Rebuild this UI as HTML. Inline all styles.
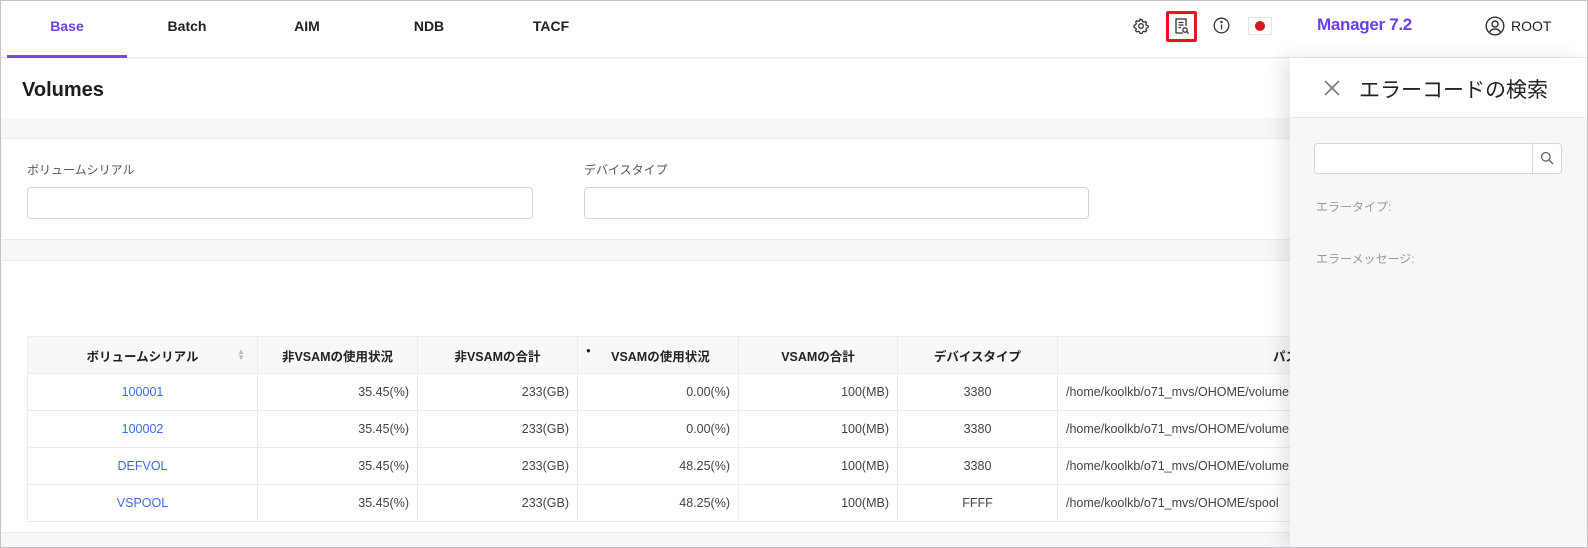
<!DOCTYPE html>
<html><head><meta charset="utf-8"><style>
*{box-sizing:border-box;margin:0;padding:0}
body{width:1588px;height:548px;overflow:hidden;background:#f6f7f9;font-family:"Liberation Sans","Noto Sans CJK JP",sans-serif;color:#222;position:relative}
.frame{position:absolute;left:0;top:0;width:1588px;height:548px;border:1px solid #c4c4c4;pointer-events:none;z-index:50}
.hdr{position:absolute;left:0;top:0;width:1588px;height:58px;background:#fff;border-bottom:1px solid #e8e8ec}
.tab{position:absolute;top:0;height:58px;line-height:52px;width:120px;text-align:center;font-size:14px;font-weight:bold;color:#222}
.abs{position:absolute}
.card{position:absolute;background:#fff}
.lbl{position:absolute;font-size:12px;color:#555}
.inp{position:absolute;height:32px;border:1px solid #d6d6da;border-radius:4px;background:#fff}
table{border-collapse:collapse;position:absolute;left:27px;top:336px;table-layout:fixed}
td,th{border:1px solid #ececee;height:37px;font-size:12.5px;padding:0 8px;white-space:nowrap;overflow:hidden}
th{background:#f8f8f9;font-weight:bold;color:#222}
td{color:#444}
.r{text-align:right}.c{text-align:center}.lk{color:#3a6cf0;text-align:center}
.panel{position:absolute;left:1290px;top:58px;width:296px;height:490px;background:#f6f7f9;box-shadow:-8px 0 18px rgba(0,0,0,.10);z-index:10}
</style></head><body>
<div class="hdr">
 <div class="tab" style="left:7px;color:#6b3ff0">Base</div>
 <div class="abs" style="left:7px;top:55px;width:120px;height:3px;background:#7447f0"></div>
 <div class="tab" style="left:127px">Batch</div>
 <div class="tab" style="left:247px">AIM</div>
 <div class="tab" style="left:369px">NDB</div>
 <div class="tab" style="left:491px">TACF</div>
 <svg class="abs" style="left:1133px;top:18px" width="16" height="16" viewBox="0 0 16 16" fill="none" stroke="#333" stroke-width="1.3"><circle cx="8" cy="8" r="2.3"/><path d="M8 1.5l1.2.3.3 1.6 1.3.7 1.5-.6 1.2 1.1-.6 1.5.6 1.3 1.6.5v1.6l-1.6.5-.6 1.3.6 1.5-1.2 1.1-1.5-.6-1.3.7-.3 1.6H7l-.3-1.6-1.3-.7-1.5.6-1.2-1.1.6-1.5-.6-1.3-1.6-.5V7.2l1.6-.5.6-1.3-.6-1.5 1.2-1.1 1.5.6 1.3-.7.3-1.6z"/></svg>
 <div class="abs" style="left:1166px;top:11px;width:31px;height:31px;border:3px solid #e8151f;border-radius:2px"></div>
 <svg class="abs" style="left:1174px;top:18px" width="16" height="17" viewBox="0 0 16 17" fill="none" stroke="#333" stroke-width="1.3"><path d="M9 15H2V1h10v7"/><path d="M4.5 4.5h5M4.5 7h5M4.5 9.5h2.5"/><circle cx="11" cy="12" r="2.2"/><path d="M12.6 13.6l2 2"/></svg>
 <svg class="abs" style="left:1213px;top:17px" width="17" height="17" viewBox="0 0 17 17" fill="none" stroke="#333" stroke-width="1.3"><circle cx="8.5" cy="8.5" r="7.3"/><path d="M8.5 7.5v5"/><circle cx="8.5" cy="5" r=".6" fill="#333"/></svg>
 <div class="abs" style="left:1248px;top:17px;width:24px;height:18px;background:#fff;border:1px solid #e6e6e6"><div class="abs" style="left:6px;top:3px;width:10px;height:10px;border-radius:50%;background:#d8141c"></div></div>
 <div class="abs" style="left:1317px;top:15px;font-size:17px;font-weight:bold;color:#6b3ff0;letter-spacing:-0.3px">Manager 7.2</div>
 <svg class="abs" style="left:1485px;top:16px" width="20" height="20" viewBox="0 0 20 20" fill="none" stroke="#333" stroke-width="1.4"><circle cx="10" cy="10" r="8.8"/><circle cx="10" cy="8" r="3"/><path d="M4.5 16.3c1.3-2.4 3.3-3.3 5.5-3.3s4.2.9 5.5 3.3"/></svg>
 <div class="abs" style="left:1511px;top:18px;font-size:14px;color:#222">ROOT</div>
</div>
<div class="card" style="left:1px;top:59px;width:1586px;height:59px"></div>
<div class="abs" style="left:22px;top:79px;font-size:20px;font-weight:bold;color:#1c1c1c">Volumes</div>
<div class="card" style="left:2px;top:138px;width:1584px;height:102px;border-top:1px solid #ececee;border-bottom:1px solid #ececee"></div>
<div class="lbl" style="left:27px;top:161px">ボリュームシリアル</div>
<div class="inp" style="left:27px;top:187px;width:506px"></div>
<div class="lbl" style="left:584px;top:161px">デバイスタイプ</div>
<div class="inp" style="left:584px;top:187px;width:505px"></div>
<div class="card" style="left:2px;top:260px;width:1584px;height:273px;border-top:1px solid #ececee;border-bottom:1px solid #ececee"></div>
<table>
<colgroup><col style="width:230px"><col style="width:160px"><col style="width:160px"><col style="width:161px"><col style="width:159px"><col style="width:160px"><col style="width:300px"></colgroup>
<tr><th class="c" style="position:relative">ボリュームシリアル<span style="position:absolute;right:12px;top:12px;font-size:8px;color:#bbb;line-height:6px">▲<br>▼</span></th><th class="c">非VSAMの使用状況</th><th class="c">非VSAMの合計</th><th class="c"><span style="float:left;font-size:8px">●</span>VSAMの使用状況</th><th class="c">VSAMの合計</th><th class="c">デバイスタイプ</th><th class="c" style="text-align:left;padding-left:215px">パス</th></tr>
<tr><td class="lk">100001</td><td class="r">35.45(%)</td><td class="r">233(GB)</td><td class="r">0.00(%)</td><td class="r">100(MB)</td><td class="c">3380</td><td>/home/koolkb/o71_mvs/OHOME/volume</td></tr>
<tr><td class="lk">100002</td><td class="r">35.45(%)</td><td class="r">233(GB)</td><td class="r">0.00(%)</td><td class="r">100(MB)</td><td class="c">3380</td><td>/home/koolkb/o71_mvs/OHOME/volume</td></tr>
<tr><td class="lk">DEFVOL</td><td class="r">35.45(%)</td><td class="r">233(GB)</td><td class="r">48.25(%)</td><td class="r">100(MB)</td><td class="c">3380</td><td>/home/koolkb/o71_mvs/OHOME/volume</td></tr>
<tr><td class="lk">VSPOOL</td><td class="r">35.45(%)</td><td class="r">233(GB)</td><td class="r">48.25(%)</td><td class="r">100(MB)</td><td class="c">FFFF</td><td>/home/koolkb/o71_mvs/OHOME/spool</td></tr>
</table>
<div class="panel">
 <div class="abs" style="left:0;top:0;width:296px;height:60px;background:#fff;border-bottom:1px solid #e8e8ec"></div>
 <svg class="abs" style="left:33px;top:21px" width="18" height="18" viewBox="0 0 18 18" stroke="#777" stroke-width="1.6"><path d="M2 2l14 14M16 2L2 16"/></svg>
 <div class="abs" style="left:69px;top:16px;font-size:21px;color:#222">エラーコードの検索</div>
 <div class="abs" style="left:24px;top:85px;width:248px;height:31px;border:1px solid #d6d6da;border-radius:4px;background:#fff"></div>
 <div class="abs" style="left:242px;top:85px;width:1px;height:31px;background:#ddd"></div>
 <svg class="abs" style="left:250px;top:93px" width="14" height="14" viewBox="0 0 14 14" fill="none" stroke="#666" stroke-width="1.3"><circle cx="5.8" cy="5.8" r="4.3"/><path d="M9 9l4 4"/></svg>
 <div class="abs" style="left:26px;top:140px;font-size:12px;color:#999">エラータイプ:</div>
 <div class="abs" style="left:26px;top:192px;font-size:12px;color:#999">エラーメッセージ:</div>
</div>
<div class="frame"></div>
</body></html>
